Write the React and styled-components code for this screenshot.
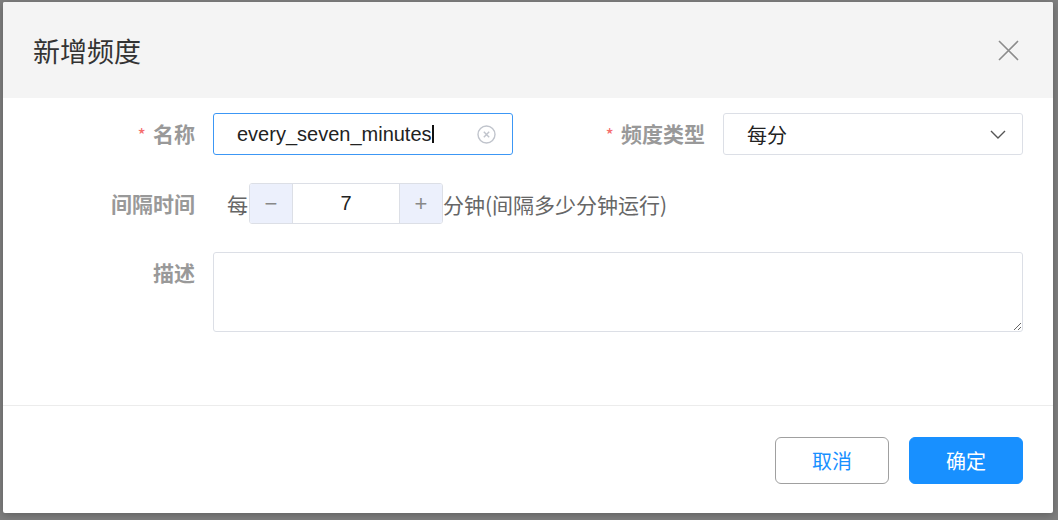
import React, { useState } from "react";
import styled, { createGlobalStyle } from "styled-components";

const GlobalStyle = createGlobalStyle`
  html, body {
    margin: 0;
    padding: 0;
  }
  body {
    font-family: "Liberation Sans", "Noto Sans CJK SC", sans-serif;
    background: #808080;
  }
`;

const Overlay = styled.div`
  width: 1058px;
  height: 520px;
  background: #7f7f7f;
  padding: 2px 5px 0 3px;
  box-sizing: border-box;
  overflow: hidden;
`;

const Dialog = styled.div`
  width: 1050px;
  height: 511px;
  background: #fff;
  border-radius: 2px;
  box-shadow: 0 2px 8px rgba(0, 0, 0, 0.25);
  display: flex;
  flex-direction: column;
  overflow: hidden;
`;

const Header = styled.div`
  height: 96px;
  background: #f4f4f4;
  display: flex;
  align-items: center;
  justify-content: space-between;
  padding: 0 34px 0 30px;
`;

const Title = styled.h2`
  margin: 0;
  font-family: "Noto Sans CJK SC", sans-serif;
  font-size: 27px;
  font-weight: 400;
  color: #333;
`;

const CloseButton = styled.button`
  border: none;
  background: none;
  padding: 0;
  width: 21px;
  height: 21px;
  cursor: pointer;
  display: flex;
`;

const Body = styled.div`
  height: 307px;
  box-sizing: border-box;
  padding: 15px 30px 0 0;
`;

const Form = styled.div`
  display: grid;
  grid-template-columns: 210px 300px 210px 300px;
  row-gap: 28px;
  align-items: start;
`;

const Label = styled.label`
  text-align: right;
  padding-right: 18px;
  line-height: 41px;
  font-family: "Noto Sans CJK SC", sans-serif;
  font-size: 21px;
  font-weight: 700;
  color: #999;
`;

const Star = styled.span`
  color: #f56c6c;
  font-size: 18px;
  margin-right: 7px;
  font-weight: 400;
`;

const Field = styled.div`
  height: 42px;
  box-sizing: border-box;
  border: 1px solid ${(p) => (p.$focused ? "#3c97f5" : "#dcdfe6")};
  border-radius: 3px;
  display: flex;
  align-items: center;
  padding: 0 16px 0 23px;
  font-size: 20px;
  color: #222;
  background: #fff;
`;

const Value = styled.span`
  white-space: nowrap;
  font-family: ${(p) =>
    p.$cjk ? '"Noto Sans CJK SC", sans-serif' : '"Liberation Sans", sans-serif'};
`;

const Caret = styled.span`
  width: 2px;
  height: 18px;
  background: #111;
`;

const Spacer = styled.span`
  flex: 1;
`;

const Wide = styled.div`
  grid-column: 2 / span 3;
`;

const Inline = styled.div`
  grid-column: 2 / span 3;
  display: flex;
  align-items: center;
  height: 41px;
  padding-left: 14px;
  font-family: "Noto Sans CJK SC", sans-serif;
  font-size: 21px;
  color: #666;
`;

const Stepper = styled.div`
  display: flex;
  width: 194px;
  height: 41px;
  margin-left: 1px;
  border: 1px solid #dcdfe6;
  border-radius: 3px;
  box-sizing: border-box;
  overflow: hidden;
  background: #fff;
`;

const StepBtn = styled.button`
  width: 43px;
  border: none;
  padding: 0;
  background: #ecf0fc;
  color: #888;
  font-size: 22px;
  font-weight: 300;
  display: flex;
  align-items: center;
  justify-content: center;
  border-${(p) => (p.$side === "left" ? "right" : "left")}: 1px solid #dcdfe6;
  cursor: pointer;
`;

const StepValue = styled.div`
  flex: 1;
  display: flex;
  align-items: center;
  justify-content: center;
  font-family: "Liberation Sans", sans-serif;
  font-size: 20px;
  color: #222;
`;

const TextArea = styled.textarea`
  display: block;
  width: 810px;
  height: 80px;
  box-sizing: border-box;
  border: 1px solid #dcdfe6;
  border-radius: 3px;
  padding: 8px 12px;
  font-size: 18px;
  font-family: inherit;
  outline: none;
`;

const Footer = styled.div`
  border-top: 1px solid #ececec;
  padding: 31px 30px 0 0;
  display: flex;
  justify-content: flex-end;
  gap: 20px;
`;

const Button = styled.button`
  width: 114px;
  height: 47px;
  border-radius: 6px;
  font-family: "Noto Sans CJK SC", sans-serif;
  font-size: 20px;
  cursor: pointer;
  border: 1px solid ${(p) => (p.$primary ? "#1890ff" : "#a0a0a0")};
  background: ${(p) => (p.$primary ? "#1890ff" : "#fff")};
  color: ${(p) => (p.$primary ? "#fff" : "#1890ff")};
`;

const CloseIcon = () => (
  <svg width="21" height="21" viewBox="0 0 21 21">
    <path d="M1 1 L20 20 M20 1 L1 20" stroke="#8c8c8c" strokeWidth="1.6" fill="none" />
  </svg>
);

const ClearIcon = () => (
  <svg width="19" height="19" viewBox="0 0 19 19">
    <circle cx="9.5" cy="9.5" r="8.5" stroke="#c0c4cc" strokeWidth="1.4" fill="none" />
    <path d="M6.8 6.8 L12.2 12.2 M12.2 6.8 L6.8 12.2" stroke="#c0c4cc" strokeWidth="1.4" />
  </svg>
);

const Chevron = () => (
  <svg width="16" height="9" viewBox="0 0 16 9">
    <path d="M1 1 L8 8 L15 1" stroke="#555" strokeWidth="1.4" fill="none" />
  </svg>
);

const App = () => {
  const [count, setCount] = useState(7);

  return (
    <>
      <GlobalStyle />
      <Overlay>
        <Dialog>
          <Header>
            <Title>新增频度</Title>
            <CloseButton aria-label="关闭">
              <CloseIcon />
            </CloseButton>
          </Header>
          <Body>
            <Form>
              <Label>
                <Star>*</Star>名称
              </Label>
              <Field $focused>
                <Value>every_seven_minutes</Value>
                <Caret />
                <Spacer />
                <ClearIcon />
              </Field>
              <Label>
                <Star>*</Star>频度类型
              </Label>
              <Field>
                <Value $cjk>每分</Value>
                <Spacer />
                <Chevron />
              </Field>

              <Label>间隔时间</Label>
              <Inline>
                每
                <Stepper>
                  <StepBtn $side="left" onClick={() => setCount(count - 1)}>
                    −
                  </StepBtn>
                  <StepValue>{count}</StepValue>
                  <StepBtn $side="right" onClick={() => setCount(count + 1)}>
                    +
                  </StepBtn>
                </Stepper>
                分钟(间隔多少分钟运行)
              </Inline>

              <Label>描述</Label>
              <Wide>
                <TextArea />
              </Wide>
            </Form>
          </Body>
          <Footer>
            <Button>取消</Button>
            <Button $primary>确定</Button>
          </Footer>
        </Dialog>
      </Overlay>
    </>
  );
};

export default App;
